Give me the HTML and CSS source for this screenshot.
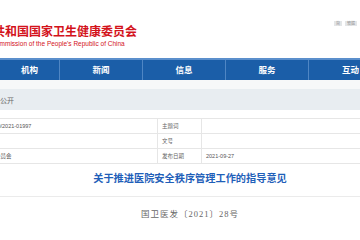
FILE: index.html
```html
<!DOCTYPE html>
<html lang="zh-CN">
<head>
    <meta charset="UTF-8">
    <title>关于推进医院安全秩序管理工作的指导意见</title>
    <link rel="stylesheet" href="styles.css">
</head>
<body>

    <!-- Header -->

    <div class="header">
        <div class="brand">
            <div class="brand-cn">中华人民共和国国家卫生健康委员会</div>
            <div class="brand-en">National Health Commission of the People's Republic of China</div>
        </div>
        <div class="lang">
            <span>简</span>
            <span>繁體</span>
        </div>
    </div>

    <!-- Nav -->

    <div class="nav">
        <div class="nav-item first">机构</div>
        <div class="nav-item">新闻</div>
        <div class="nav-item">信息</div>
        <div class="nav-item">服务</div>
        <div class="nav-item last">互动</div>
    </div>

    <div class="strip"></div>

    <div class="crumb">
        <p>信息公开</p>
    </div>

    <!-- Article -->

    <div class="page">
        <div class="meta">
            <div class="cell label">索引号</div>
            <div class="cell">000013610/2021-01997</div>
            <div class="cell label">主题词</div>
            <div class="cell"></div>

            <div class="cell label">发文机关</div>
            <div class="cell"></div>
            <div class="cell label">文号</div>
            <div class="cell"></div>

            <div class="cell label">发布机构</div>
            <div class="cell">卫生健康委员会</div>
            <div class="cell label">发布日期</div>
            <div class="cell">2021-09-27</div>
        </div>

        <h2 class="title">关于推进医院安全秩序管理工作的指导意见</h2>

        <div class="rule"></div>

        <p class="doc-no">国卫医发〔2021〕28号</p>
    </div>

</body>
</html>
```

FILE: styles.css
```css
*{
    margin: 0;
    padding: 0;
    box-sizing: border-box;
}

body{
    width: 360px;
    height: 240px;
    overflow: hidden;
    background: #fff;
    font-family: "Liberation Sans", "Noto Sans CJK SC", sans-serif;
}

.header{
    height: 58px;
    display: flex;
    justify-content: space-between;
    align-items: flex-start;
}

.brand{
    margin-left: -55px;
    padding-top: 25px;
    white-space: nowrap;
}

.brand-cn{
    color: #d3121b;
    font-size: 12px;
    font-weight: bold;
    line-height: 14px;
}

.brand-en{
    color: #d3121b;
    font-size: 6.5px;
    line-height: 8px;
    margin-top: 1px;
}

.lang{
    display: flex;
    gap: 3px;
    padding-top: 21px;
    padding-right: 3px;
}

.lang span{
    background: #e4e6e8;
    color: #9a9a9a;
    font-size: 4px;
    line-height: 5px;
    padding: 0 2px;
}

.nav{
    display: flex;
    height: 22px;
    background: #1b5ea8;
    border-top: 2px solid #5b8fcc;
}

.nav-item{
    width: 83px;
    flex-shrink: 0;
    color: #fff;
    font-size: 8.5px;
    font-weight: bold;
    line-height: 20px;
    text-align: center;
    border-right: 1px solid #4f86c4;
}

.nav-item.first{
    width: 60px;
}

.nav-item.last{
    border-right: none;
}

.strip{
    height: 9px;
    background: #f7f8f9;
}

.crumb{
    height: 21px;
    background: #e8edf1;
    margin-left: -14px;
    display: flex;
    align-items: center;
}

.crumb p{
    color: #6a6a6a;
    font-size: 7px;
}

.page{
    width: 564px;
    margin-left: -92px;
    padding-top: 8px;
}

.meta{
    display: grid;
    grid-template-columns: 61px 189px 44px 1fr;
    border-top: 1px solid #e6e6e6;
}

.cell{
    height: 15px;
    border-bottom: 1px solid #e6e6e6;
    border-right: 1px solid #e6e6e6;
    padding-left: 4px;
    font-size: 5.5px;
    line-height: 14px;
    color: #555;
    white-space: nowrap;
}

.cell:nth-child(4n){
    border-right: none;
}

.label{
    color: #666;
}

.title{
    margin-top: 8px;
    text-align: center;
    color: #1f5fb9;
    font-size: 10.2px;
    line-height: 14px;
    font-weight: bold;
}

.rule{
    margin-top: 10px;
    height: 1px;
    background: #ebebeb;
}

.doc-no{
    margin-top: 11px;
    text-align: center;
    font-family: "Liberation Serif", "Noto Sans CJK SC", serif;
    font-size: 8.5px;
    line-height: 12px;
    letter-spacing: 1px;
    color: #666;
}
```
